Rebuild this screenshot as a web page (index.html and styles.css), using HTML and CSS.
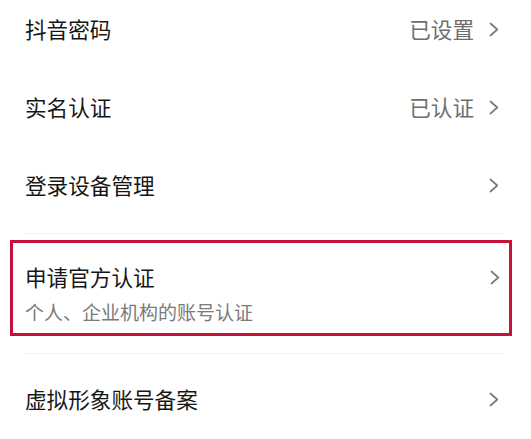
FILE: index.html
```html
<!DOCTYPE html>
<html lang="zh-CN">
<head>
<meta charset="utf-8">
<title>账号与安全</title>
<link rel="stylesheet" href="styles.css">
</head>
<body>
<div class="list">
  <div class="row">
    <span class="label">抖音密码</span>
    <span class="value">已设置</span>
    <svg class="chev" viewBox="0 0 10 15" width="10" height="15"><polyline points="1.5,1.5 8.3,7.5 1.5,13.5"/></svg>
  </div>
  <div class="row">
    <span class="label">实名认证</span>
    <span class="value">已认证</span>
    <svg class="chev" viewBox="0 0 10 15" width="10" height="15"><polyline points="1.5,1.5 8.3,7.5 1.5,13.5"/></svg>
  </div>
  <div class="row">
    <span class="label">登录设备管理</span>
    <svg class="chev" viewBox="0 0 10 15" width="10" height="15"><polyline points="1.5,1.5 8.3,7.5 1.5,13.5"/></svg>
  </div>
  <div class="divider first"></div>
  <div class="highlight">
    <div class="hl-title">
      <span class="label">申请官方认证</span>
      <svg class="chev" viewBox="0 0 10 15" width="10" height="15"><polyline points="1.5,1.5 8.3,7.5 1.5,13.5"/></svg>
    </div>
    <div class="hl-sub">个人、企业机构的账号认证</div>
  </div>
  <div class="divider second"></div>
  <div class="row last">
    <span class="label">虚拟形象账号备案</span>
    <svg class="chev" viewBox="0 0 10 15" width="10" height="15"><polyline points="1.5,1.5 8.3,7.5 1.5,13.5"/></svg>
  </div>
</div>
</body>
</html>
```

FILE: styles.css
```css
html, body {
  margin: 0;
  padding: 0;
  background: #ffffff;
}

body {
  font-family: "Noto Sans CJK SC", "Noto Sans", sans-serif;
  color: #161616;
  overflow: hidden;
}

.list {
  margin-top: -10px;
}

.row {
  display: flex;
  align-items: center;
  height: 78px;
  padding: 0 32px 0 25px;
}

.row.last {
  height: 90px;
}

.label {
  flex: 1;
  font-size: 21.6px;
  line-height: 28px;
  color: #161616;
}

.value {
  font-size: 21.6px;
  line-height: 28px;
  color: #6e6e6e;
  margin-right: 15px;
}

.chev {
  display: block;
  flex: none;
}

.chev polyline {
  fill: none;
  stroke: #7a7a7a;
  stroke-width: 1.7;
  stroke-linecap: round;
  stroke-linejoin: round;
}

.divider {
  height: 1px;
  background: #f0f0f0;
  margin: 0 28px 0 25px;
}

.divider.first {
  margin-top: 9px;
}

.divider.second {
  margin-top: 17px;
}

.highlight {
  margin: 6px 19px 0 10px;
  border: 3px solid #c4133a;
  padding: 20px 9px 9px 12px;
}

.hl-title {
  display: flex;
  align-items: center;
}

.hl-sub {
  margin-top: 9px;
  font-size: 19px;
  line-height: 24px;
  color: #7a7a7a;
}
```
